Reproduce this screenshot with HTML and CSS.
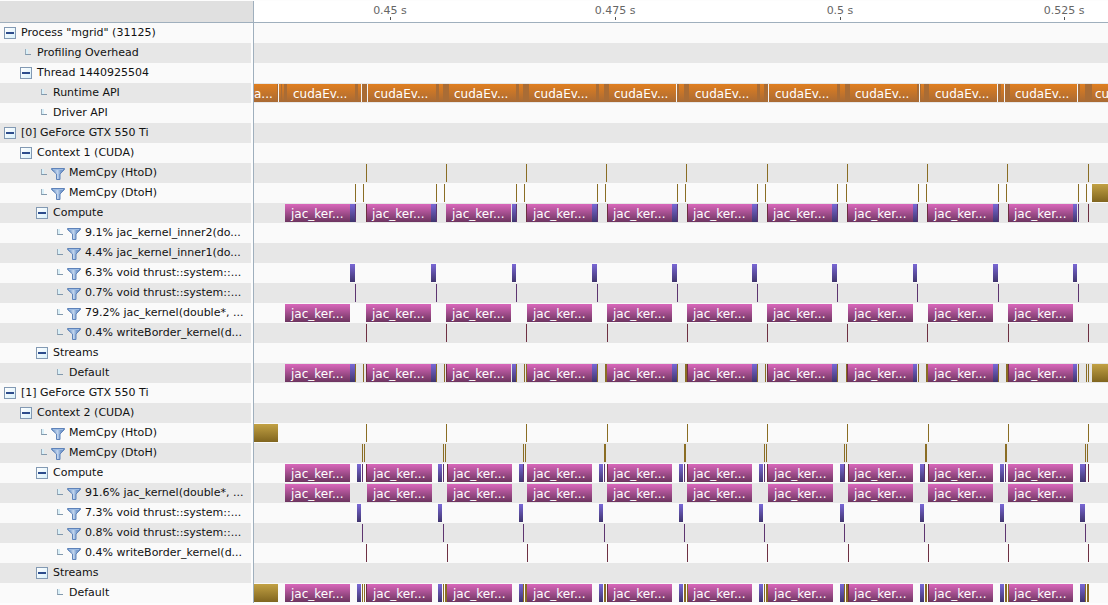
FILE: index.html
```html
<!DOCTYPE html>
<html lang="en">
<head>
<meta charset="utf-8">
<title>Timeline</title>
<link rel="stylesheet" href="styles.css">
</head>
<body>
<svg class="defs" aria-hidden="true">
  <defs>
    <linearGradient id="funnel-fill" x1="0" y1="0" x2="1" y2="0">
      <stop offset="0.1" stop-color="#6f95c8"/>
      <stop offset="0.45" stop-color="#c3d6ee"/>
      <stop offset="0.7" stop-color="#7c9fd0"/>
      <stop offset="1" stop-color="#6488be"/>
    </linearGradient>
    <symbol id="funnel" viewBox="0 0 14 12">
      <path d="M0.5 0.5H13.5V1.5L9 6V11.5H5.5V6L0.5 1.5Z" fill="url(#funnel-fill)" stroke="#5f83b9"/>
      <path d="M2 1.5H12" stroke="#9dbbe2"/>
    </symbol>
  </defs>
</svg>
<main class="profiler">
  <header class="head">
    <div class="corner"></div>
    <div class="axis" id="axis"></div>
  </header>
  <div class="rows" id="rows"></div>
</main>
<script src="timeline.js"></script>
</body>
</html>
```
FILE: styles.css
```css
* { box-sizing: border-box; }

body {
  margin: 0;
  background: #fdfdfd;
  color: #111;
  font: 11px/20px "DejaVu Sans", sans-serif;
  overflow: hidden;
}

button { margin: 0; padding: 0; font: inherit; }

.defs { position: absolute; width: 0; height: 0; }

.profiler { display: flex; flex-direction: column; padding-top: 1px; }

.head { display: flex; height: 22px; }

.corner {
  flex: none;
  width: 254px;
  background: #e0e0e0;
  border-right: 1px solid #9fafbd;
  border-bottom: 1px solid #9fafbd;
}

.axis {
  position: relative;
  flex: 1;
  overflow: hidden;
  background: #fff;
  border-bottom: 1px solid #9fafbd;
  color: #666;
}

.mark { position: absolute; top: 0; height: 20px; width: 80px; margin-left: -40px; text-align: center; }

.mark::after {
  content: "";
  position: absolute;
  left: 40px;
  bottom: 1px;
  width: 1px;
  height: 3px;
  background: #555;
}

.row { display: flex; height: 20px; }

.name {
  flex: none;
  display: flex;
  align-items: center;
  width: 251px;
  padding-left: 4px;
  background: #fafafa;
  white-space: nowrap;
}

.depth-1 { padding-left: 20px; }
.depth-2 { padding-left: 36px; }
.depth-3 { padding-left: 52px; }

.text { height: 20px; line-height: 19px; }

.toggle {
  display: flex;
  align-items: center;
  justify-content: center;
  width: 12px;
  height: 12px;
  margin-right: 5px;
  border: 1px solid #8299b3;
  background: linear-gradient(135deg, #fff, #d8f0fa);
}

.toggle::before { content: ""; width: 8px; height: 2px; background: #2c4c8c; }

.elbow {
  width: 6px;
  height: 6px;
  margin: 0 6px 2px 5px;
  border-left: 1px solid #9aabba;
  border-bottom: 1px solid #8299ad;
  background: linear-gradient(90deg, #d8eff8 2px, transparent 2px);
}

.funnel { width: 14px; height: 12px; margin: 1px 4px 0 -2px; }

.track {
  position: relative;
  flex: 1;
  margin-left: 2px;
  border-left: 1px solid #9fafbd;
  background: #fafafa;
  overflow: hidden;
}

.row:nth-child(even) .name,
.row:nth-child(even) .track { background: #e7e7e7; }

.event {
  position: absolute;
  top: 1px;
  height: 18px;
  overflow: hidden;
  color: #fff;
  font-size: 12px;
  line-height: 20px;
  white-space: nowrap;
}

.api { background: linear-gradient(#e07f20, #a96a34); }
.call { background: #a96c35; }
.idle { background: #f4f4f4; }
.jac { padding-left: 6px; background: linear-gradient(#d967bb, #6d3560); }
.thrust { background: linear-gradient(#7a68d6, #40356e); }
.reduce { background: #5e3570; }
.border { background: #6e3042; }
.copy { background: #8a6d24; }
.block { background: linear-gradient(#c2a144, #80651f); }
```
FILE: timeline.js
```javascript
// Left edge of the visible time range, in timeline pixels.
const ORIGIN = 254;

const spans = (kind, width, starts, text) => starts.map(x => [kind, x, width, text]);
const ranges = (kind, list) => list.map(([from, to]) => [kind, from, to - from]);
const JAC = "jac_ker...";

const runtime = [
  ["api", 254, 860],
  ...ranges("call", [[277, 278], [281, 282], [284, 287], [355, 358], [362, 367], [436, 439], [443, 449],
    [516, 519], [523, 529], [596, 599], [604, 609], [677, 679], [684, 689], [757, 760], [764, 768],
    [837, 840], [845, 850], [917, 919], [920, 921], [924, 929], [998, 1001], [1005, 1010],
    [1078, 1080], [1085, 1092]]),
  ...spans("idle", 1, [278, 361, 367, 676, 768, 919, 997, 1004, 1077]),
  ["caption", 254, 22, "a..."],
  ...spans("caption", 60, [293, 374, 454, 534, 614, 695, 775, 855, 935, 1015, 1095], "cudaEv...")
];

const a = {
  htod: spans("copy", 1, [366, 446, 526, 606, 686, 767, 847, 927, 1007, 1088]),
  dtoh: [...spans("copy", 1, [355, 363, 436, 444, 516, 524, 597, 605, 677, 685, 757, 765, 837, 846,
    918, 926, 998, 1006, 1078, 1086]), ["block", 1092, 30]],
  jac: spans("jac", 65, [285, 366, 446, 527, 607, 687, 767, 848, 928, 1008], JAC),
  thrust: ranges("thrust", [[350, 355], [431, 436], [512, 516], [592, 597], [672, 677], [752, 757],
    [832, 837], [913, 917], [993, 998], [1073, 1077]]),
  reduce: spans("reduce", 1, [355, 436, 516, 597, 677, 757, 837, 917, 998, 1078]),
  border: spans("border", 1, [366, 446, 526, 607, 687, 767, 847, 927, 1008, 1088])
};

const b = {
  htod: [["block", 254, 24], ...spans("copy", 1, [366, 446, 526, 607, 687, 767, 847, 928, 1008, 1088])],
  dtoh: spans("copy", 1, [362, 364, 443, 445, 523, 525, 604, 605, 684, 685, 764, 766, 844, 846,
    925, 926, 1005, 1006, 1085, 1087]),
  jac: spans("jac", 65, [285, 367, 447, 527, 607, 687, 768, 848, 928, 1008], JAC),
  thrust: ranges("thrust", [[357, 361], [438, 442], [519, 523], [599, 603], [679, 683], [759, 763],
    [840, 844], [920, 924], [1000, 1004], [1080, 1085]]),
  reduce: spans("reduce", 1, [362, 443, 523, 604, 684, 764, 844, 924, 1005, 1085]),
  border: spans("border", 1, [366, 447, 527, 607, 687, 767, 848, 928, 1008, 1088])
};

const without = (list, ...starts) => list.filter(e => !starts.includes(e[1]));

// [depth, node type, label, events]
const rows = [
  [0, "open", 'Process "mgrid" (31125)'],
  [1, "leaf", "Profiling Overhead"],
  [1, "open", "Thread 1440925504"],
  [2, "leaf", "Runtime API", runtime],
  [2, "leaf", "Driver API"],
  [0, "open", "[0] GeForce GTX 550 Ti"],
  [1, "open", "Context 1 (CUDA)"],
  [2, "filter", "MemCpy (HtoD)", a.htod],
  [2, "filter", "MemCpy (DtoH)", a.dtoh],
  [2, "open", "Compute", [...a.jac, ...a.thrust, ...a.reduce, ...without(a.border, 446)]],
  [3, "filter", "9.1% jac_kernel_inner2(do..."],
  [3, "filter", "4.4% jac_kernel_inner1(do..."],
  [3, "filter", "6.3% void thrust::system::...", a.thrust],
  [3, "filter", "0.7% void thrust::system::...", a.reduce],
  [3, "filter", "79.2% jac_kernel(double*, ...", a.jac],
  [3, "filter", "0.4% writeBorder_kernel(d...", a.border],
  [2, "open", "Streams"],
  [3, "leaf", "Default", [...a.htod, ...a.jac, ...a.thrust, ...without(a.border, 526, 607, 927, 1088), ...a.dtoh]],
  [0, "open", "[1] GeForce GTX 550 Ti"],
  [1, "open", "Context 2 (CUDA)"],
  [2, "filter", "MemCpy (HtoD)", b.htod],
  [2, "filter", "MemCpy (DtoH)", b.dtoh],
  [2, "open", "Compute", [...b.jac, ...b.thrust, ...b.reduce, ...without(b.border, 527, 1008)]],
  [3, "filter", "91.6% jac_kernel(double*, ...", b.jac],
  [3, "filter", "7.3% void thrust::system::...", b.thrust],
  [3, "filter", "0.8% void thrust::system::...", b.reduce],
  [3, "filter", "0.4% writeBorder_kernel(d...", b.border],
  [2, "open", "Streams"],
  [3, "leaf", "Default", [...b.jac, ...b.thrust, ...without(b.border, 447, 527, 1008, 1088), ...b.htod.filter(e => ![366, 607, 928].includes(e[1])), ...b.dtoh]]
];

const marks = [[390, "0.45 s"], [615, "0.475 s"], [840, "0.5 s"], [1064, "0.525 s"]];

const event = ([kind, x, width, text = ""]) =>
  `<div class="event ${kind}" style="left:${x - ORIGIN}px;width:${width}px">${text}</div>`;

const icons = {
  open: label => `<button class="toggle" type="button" aria-expanded="true" aria-label='Collapse ${label.replace(/"/g, "")}'></button>`,
  leaf: () => '<span class="elbow"></span>',
  filter: () => '<span class="elbow"></span><svg class="funnel" aria-hidden="true"><use href="#funnel"/></svg>'
};

document.getElementById("axis").innerHTML = marks
  .map(([x, text]) => `<div class="mark" style="left:${x - ORIGIN}px">${text}</div>`).join("");

document.getElementById("rows").innerHTML = rows
  .map(([depth, type, label, events = []]) => `<div class="row">
    <div class="name depth-${depth}">${icons[type](label)}<span class="text">${label}</span></div>
    <div class="track">${events.map(event).join("")}</div>
  </div>`).join("");
```
